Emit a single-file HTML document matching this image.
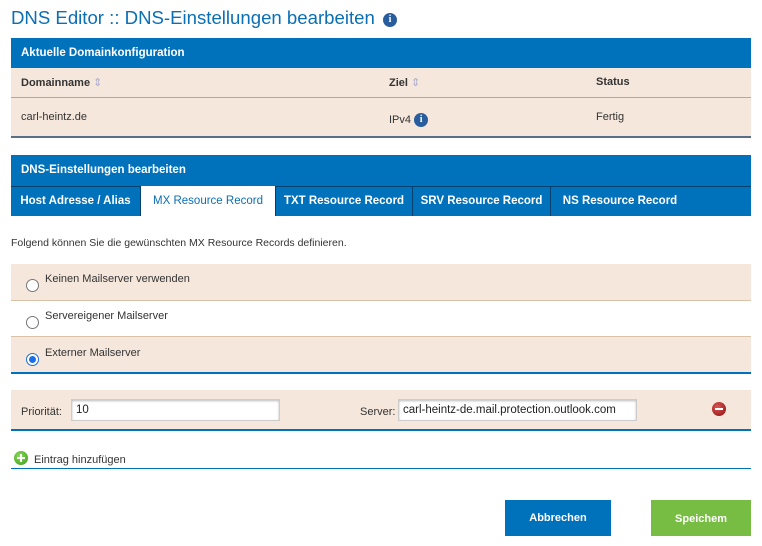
<!DOCTYPE html>
<html><head><meta charset="utf-8"><style>
*{margin:0;padding:0;box-sizing:border-box}
body{width:762px;height:546px;background:#fff;font-family:"Liberation Sans",sans-serif;color:#333;position:relative;overflow:hidden}
.a{position:absolute}
.blue{background:#0071bb;color:#fff;font-weight:bold;font-size:11.5px}
.beige{background:#f5e7dc}
.t{font-size:11px;white-space:nowrap}
.info{display:inline-block;width:14px;height:14px;border-radius:50%;background:#2a5d9e;color:#fff;font:bold 10px "Liberation Serif",serif;text-align:center;line-height:14px}
.tab{position:absolute;top:186px;height:30px;line-height:30px;font-size:11.5px;font-weight:bold;color:#fff;text-align:center;border-right:1px solid #003f6e}
.radio{position:absolute;left:26px;width:13px;height:13px;border-radius:50%;border:1px solid #777;background:#fff}
.inp{position:absolute;height:22px;border:1px solid #ccc;box-shadow:inset 0 1px 2px #bbb;background:#fff;font-size:11.5px;line-height:20px;padding-left:4px;color:#222}
</style></head><body>
<div class="a" style="left:11px;top:7px;font-size:18.6px;color:#0a6fb5;white-space:nowrap">DNS Editor :: DNS-Einstellungen bearbeiten <span class="info" style="vertical-align:2px;margin-left:3px">i</span></div>

<div class="a blue" style="left:11px;top:38px;width:740px;height:30px;line-height:30px;padding-left:10px">Aktuelle Domainkonfiguration</div>
<div class="a beige" style="left:11px;top:68px;width:740px;height:30px;border-bottom:1px solid #aaa"></div>
<div class="a t" style="left:21px;top:76px;font-weight:bold">Domainname <span style="color:#aac;font-weight:normal">&#8661;</span></div>
<div class="a t" style="left:389px;top:76px;font-weight:bold">Ziel <span style="color:#aac;font-weight:normal">&#8661;</span></div>
<div class="a t" style="left:596px;top:76px;font-weight:bold">Status</div>
<div class="a beige" style="left:11px;top:98px;width:740px;height:40px;border-bottom:2px solid #5a6f86"></div>
<div class="a t" style="left:21px;top:111px">carl-heintz.de</div>
<div class="a t" style="left:389px;top:113px">IPv4 <span class="info" style="vertical-align:1px">i</span></div>
<div class="a t" style="left:596px;top:111px">Fertig</div>

<div class="a blue" style="left:11px;top:155px;width:740px;height:31px;line-height:31px;padding-left:10px">DNS-Einstellungen bearbeiten</div>
<div class="a" style="left:11px;top:186px;width:740px;height:30px;background:#0071bb;border-top:1px solid #003f6e"></div>
<div class="tab" style="left:11px;width:130px">Host Adresse / Alias</div>
<div class="tab" style="left:141px;width:135px;background:#fff;color:#0a6fb5;font-weight:normal">MX Resource Record</div>
<div class="tab" style="left:276px;width:137px">TXT Resource Record</div>
<div class="tab" style="left:413px;width:138px">SRV Resource Record</div>
<div class="tab" style="left:551px;width:138px;border:none">NS Resource Record</div>

<div class="a t" style="left:11px;top:237px;font-size:10.5px">Folgend können Sie die gewünschten MX Resource Records definieren.</div>

<div class="a beige" style="left:11px;top:264px;width:740px;height:37px;border-bottom:1px solid #d9c2a8"></div>
<div class="radio" style="top:279px"></div><div class="a t" style="left:45px;top:273px">Keinen Mailserver verwenden</div>
<div class="a" style="left:11px;top:301px;width:740px;height:36px;border-bottom:1px solid #d9c2a8"></div>
<div class="radio" style="top:316px"></div><div class="a t" style="left:45px;top:310px">Servereigener Mailserver</div>
<div class="a beige" style="left:11px;top:337px;width:740px;height:37px;border-bottom:2px solid #0071bb"></div>
<div class="radio" style="top:353px;border-color:#1a6fd8"><div style="width:7px;height:7px;border-radius:50%;background:#1a6fe8;margin:2px"></div></div>
<div class="a t" style="left:45px;top:347px">Externer Mailserver</div>

<div class="a beige" style="left:11px;top:390px;width:740px;height:41px;border-bottom:2px solid #0071bb"></div>
<div class="a t" style="left:21px;top:406px">Priorität:</div>
<div class="inp" style="left:71px;top:399px;width:209px">10</div>
<div class="a t" style="left:360px;top:406px">Server:</div>
<div class="inp" style="left:398px;top:399px;width:239px">carl-heintz-de.mail.protection.outlook.com</div>
<div class="a" style="left:712px;top:402px;width:14px;height:14px;border-radius:50%;background:radial-gradient(circle at 40% 35%,#d55,#8a0f0f)"><div style="position:absolute;left:3px;top:6px;width:8px;height:2px;background:#fff"></div></div>

<div class="a" style="left:14px;top:451px;width:14px;height:14px;border-radius:50%;background:radial-gradient(circle at 40% 35%,#8d5,#3a9a1a)"><div style="position:absolute;left:3px;top:6px;width:8px;height:2px;background:#fff"></div><div style="position:absolute;left:6px;top:3px;width:2px;height:8px;background:#fff"></div></div>
<div class="a t" style="left:34px;top:454px">Eintrag hinzufügen</div>
<div class="a" style="left:11px;top:468px;width:740px;height:1px;background:#0071bb"></div>

<div class="a" style="left:505px;top:500px;width:106px;height:36px;background:#0071bb;color:#fff;font-size:11px;font-weight:bold;text-align:center;line-height:36px">Abbrechen</div>
<div class="a" style="left:651px;top:500px;width:100px;height:36px;background:#77bd43;color:#fff;font-size:11px;font-weight:bold;text-align:center;line-height:38px">Speichem</div>
</body></html>
